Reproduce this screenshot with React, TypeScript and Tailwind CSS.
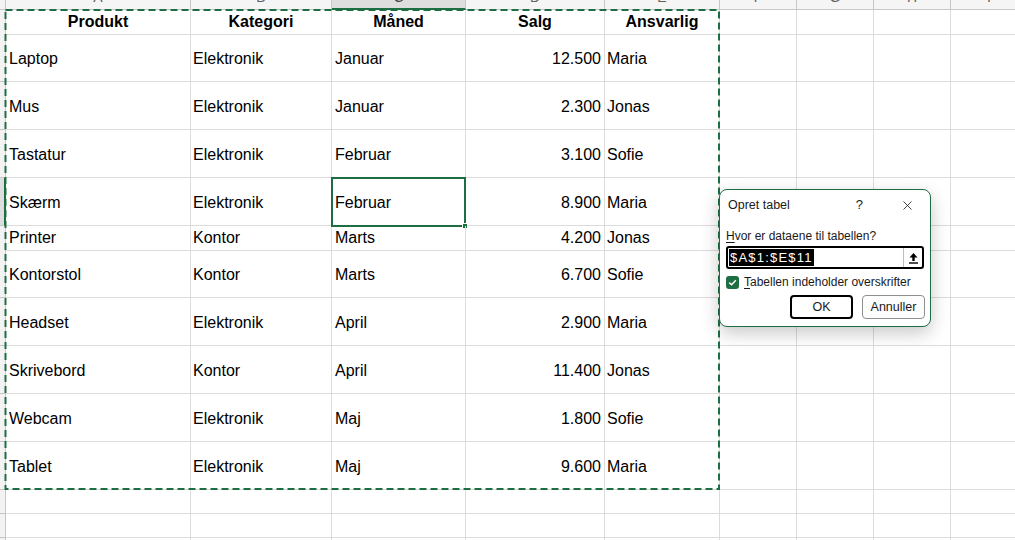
import { X } from "lucide-react";

type Row = {
  produkt: string;
  kategori: string;
  maaned: string;
  salg: string;
  ansvarlig: string;
  tall: boolean;
};

const rows: Row[] = [
  { produkt: "Laptop", kategori: "Elektronik", maaned: "Januar", salg: "12.500", ansvarlig: "Maria", tall: true },
  { produkt: "Mus", kategori: "Elektronik", maaned: "Januar", salg: "2.300", ansvarlig: "Jonas", tall: true },
  { produkt: "Tastatur", kategori: "Elektronik", maaned: "Februar", salg: "3.100", ansvarlig: "Sofie", tall: true },
  { produkt: "Skærm", kategori: "Elektronik", maaned: "Februar", salg: "8.900", ansvarlig: "Maria", tall: true },
  { produkt: "Printer", kategori: "Kontor", maaned: "Marts", salg: "4.200", ansvarlig: "Jonas", tall: false },
  { produkt: "Kontorstol", kategori: "Kontor", maaned: "Marts", salg: "6.700", ansvarlig: "Sofie", tall: true },
  { produkt: "Headset", kategori: "Elektronik", maaned: "April", salg: "2.900", ansvarlig: "Maria", tall: true },
  { produkt: "Skrivebord", kategori: "Kontor", maaned: "April", salg: "11.400", ansvarlig: "Jonas", tall: true },
  { produkt: "Webcam", kategori: "Elektronik", maaned: "Maj", salg: "1.800", ansvarlig: "Sofie", tall: true },
  { produkt: "Tablet", kategori: "Elektronik", maaned: "Maj", salg: "9.600", ansvarlig: "Maria", tall: true },
];

const cols = "grid grid-cols-[6px_185px_141px_134px_139px_115px_77px_77px_77px_77px]";
const cell = "border-r border-b border-[#dcdcdc] flex items-center";
const letters = ["A", "B", "C", "D", "E", "F", "G", "H", "I"];

function ColumnHeader() {
  return (
    <div className={`${cols} h-[24px] -mt-[14px]`}>
      <div className="border-r border-b border-[#c6c6c6] bg-[#f3f3f3]" />
      {letters.map((l) =>
        l === "C" ? (
          <div key={l} className="flex items-center justify-center border-r border-b-2 border-r-[#c6c6c6] border-b-[#1e6e43] bg-[#dedede] text-[14px] text-[#444]">
            {l}
          </div>
        ) : (
          <div key={l} className="flex items-center justify-center border-r border-b border-[#c6c6c6] bg-[#f5f5f5] text-[14px] text-[#616161]">
            {l}
          </div>
        )
      )}
    </div>
  );
}

function RowHead({ active = false }: { active?: boolean }) {
  return active ? (
    <div className="border-b border-r-2 border-b-[#c6c6c6] border-r-[#1e6e43] bg-[#dedede]" />
  ) : (
    <div className="border-r border-b border-[#c6c6c6] bg-[#f3f3f3]" />
  );
}

function EmptyCells() {
  return (
    <>
      <div className={cell} />
      <div className={cell} />
      <div className={cell} />
      <div className={cell} />
    </>
  );
}

export default function App() {
  return (
    <div className="relative w-[1015px] h-[540px] overflow-hidden bg-white text-black font-['Liberation_Sans',Arial,sans-serif] text-[16px]">
      <ColumnHeader />

      {/* header row */}
      <div className={`${cols} h-[24px]`}>
        <RowHead />
        {["Produkt", "Kategori", "Måned", "Salg", "Ansvarlig"].map((h) => (
          <div key={h} className={`${cell} justify-center font-bold`}>
            {h}
          </div>
        ))}
        <EmptyCells />
      </div>

      {rows.map((r, i) => {
        const pad = r.tall ? "pt-[2px]" : "";
        return (
          <div key={r.produkt} className={`${cols} ${r.tall ? "h-[48px]" : "h-[24px]"}`}>
            <RowHead active={i === 3} />
            <div className={`${cell} ${pad} pl-[3px]`}>{r.produkt}</div>
            <div className={`${cell} ${pad} pl-[2px]`}>{r.kategori}</div>
            <div className={`${cell} ${pad} relative pl-[3px]`}>
              {r.maaned}
              {i === 3 && (
                <>
                  <div className="absolute -left-px -top-px w-[135px] h-[50px] border-2 border-[#1e6e43]" />
                  <div className="absolute -right-[3px] -bottom-[4px] w-[6px] h-[6px] bg-[#1e6e43] border border-white" />
                </>
              )}
            </div>
            <div className={`${cell} ${pad} justify-end pr-[3px]`}>{r.salg}</div>
            <div className={`${cell} ${pad} pl-[2px]`}>{r.ansvarlig}</div>
            <EmptyCells />
          </div>
        );
      })}

      {[0, 1, 2].map((k) => (
        <div key={k} className={`${cols} h-[24px]`}>
          <RowHead />
          <div className={cell} />
          <div className={cell} />
          <div className={cell} />
          <div className={cell} />
          <div className={cell} />
          <EmptyCells />
        </div>
      ))}

      {/* copy marquee around A1:E11 */}
      <svg className="pointer-events-none absolute inset-0" width="1015" height="540">
        <rect x="5.5" y="10" width="713.5" height="479" fill="none" stroke="#1e6e43" strokeWidth="2" strokeDasharray="7 4" />
      </svg>

      {/* Opret tabel dialog */}
      <div className="absolute left-[719px] top-[189px] w-[212px] h-[138px] rounded-[8px] border border-[#1e6e43] bg-white shadow-[0_6px_18px_rgba(0,0,0,0.22)] text-[12px] text-[#1a1a1a] font-['Liberation_Sans',Arial,sans-serif]">
        <div className="flex items-center h-[29px] pl-[8px] pr-[15px] pt-[1px]">
          <span className="text-[12.5px]">Opret tabel</span>
          <span className="ml-auto mr-[37px] text-[13px]">?</span>
          <X className="w-[15px] h-[15px]" strokeWidth={1.3} />
        </div>
        <div className="mt-[9px] flex h-[16px] items-center pl-[6px]">
          <span>
            <span className="underline underline-offset-2">H</span>vor er dataene til tabellen?
          </span>
        </div>
        <div className="mx-[6px] mt-[2px] flex h-[23px] items-center rounded-[3px] border-2 border-black">
          <span className="ml-[1px] bg-black px-px text-[13px] leading-[17px] tracking-[1.2px] text-white">$A$1:$E$11</span>
          <div className="ml-auto flex h-full w-[19px] items-center justify-center border-l border-[#bdbdbd]">
            <svg width="11" height="12" viewBox="0 0 11 12">
              <path d="M5.5 1 L1.5 5.5 H4.3 V9 H6.7 V5.5 H9.5 Z" fill="#000" />
              <rect x="1" y="10.3" width="9" height="1.4" fill="#000" />
            </svg>
          </div>
        </div>
        <div className="mt-[6px] flex h-[14px] items-center pl-[6px]">
          <span className="flex h-[13px] w-[13px] items-center justify-center rounded-[3px] bg-[#1e6e43]">
            <svg width="9" height="9" viewBox="0 0 9 9">
              <path d="M1.3 4.6 L3.6 6.8 L7.8 2.2" fill="none" stroke="#fff" strokeWidth="1.5" />
            </svg>
          </span>
          <span className="ml-[5px]">
            <span className="underline underline-offset-2">T</span>abellen indeholder overskrifter
          </span>
        </div>
        <div className="mt-[6px] flex justify-end gap-[9px] pr-[5px]">
          <button className="flex h-[24px] w-[63px] items-center justify-center rounded-[4px] border-2 border-black bg-white text-[12.5px]">
            OK
          </button>
          <button className="flex h-[24px] w-[63px] items-center justify-center rounded-[4px] border border-[#8f8f8f] bg-[#fdfdfd] text-[12.5px]">
            Annuller
          </button>
        </div>
      </div>
    </div>
  );
}
